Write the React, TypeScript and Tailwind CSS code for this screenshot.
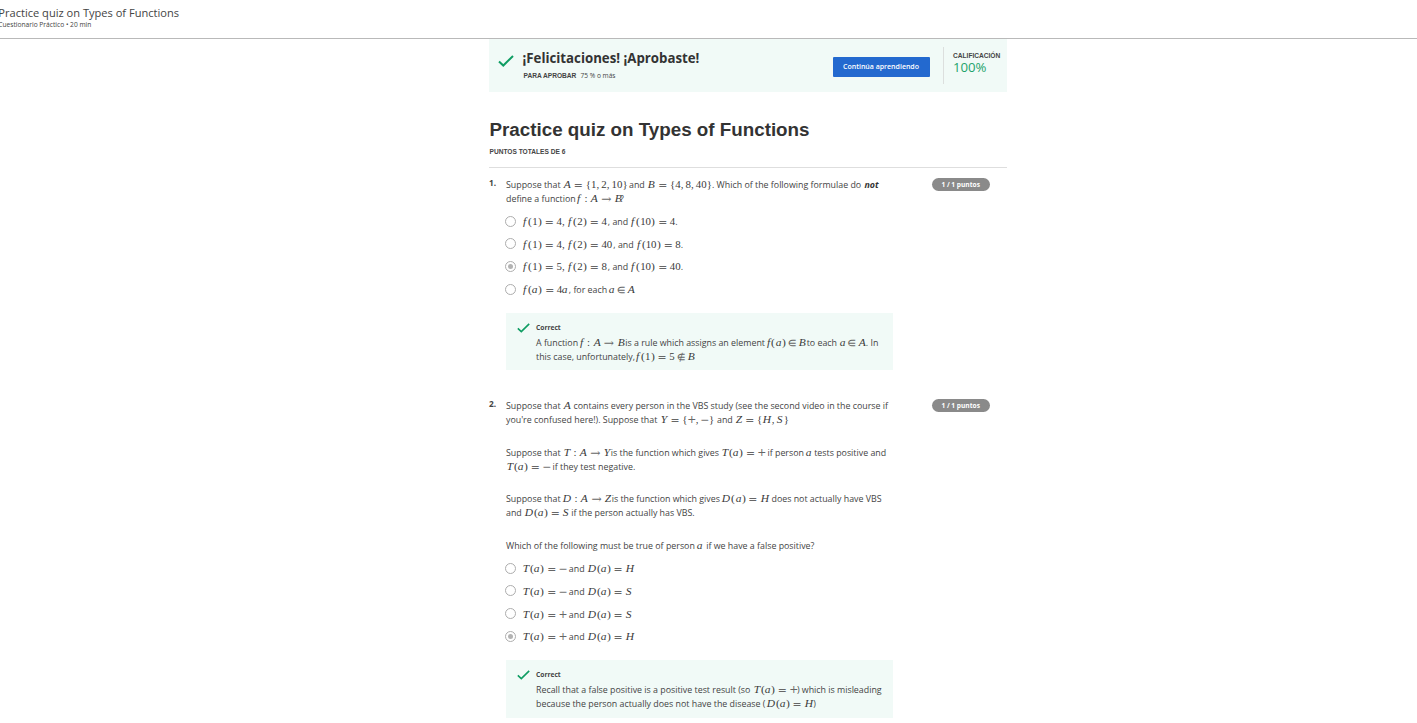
import React from "react";

const GLYPHS: Record<string, string> = {
  A: "w-[0.75em] italic", B: "w-[0.78em] italic", D: "w-[0.828em] italic", H: "w-[0.86em] italic",
  S: "w-[0.64em] italic", T: "w-[0.723em] italic", Y: "w-[0.76em] italic", Z: "w-[0.72em] italic",
  a: "w-[0.529em] italic", f: "w-[0.54em] italic",
  "(": "w-[0.42em]", ")": "w-[0.415em]", "{": "w-[0.5em]", "}": "w-[0.5em]", ",": "w-[0.445em]",
  "=": "w-[1.32em]", ":": "w-[0.834em]", "→": "w-[1.44em]", "∈": "w-[1.18em]", "∉": "w-[1.18em]",
  "+": "w-[0.76em]", "−": "w-[0.76em]",
};
const OPERATORS = "=+−→∈∉";

function Math({ children }: { children: string }) {
  return (
    <span className="-ml-[0.4px] inline-flex items-baseline font-['Liberation_Serif',serif] text-[10.85px] text-[#3a3a3a]">
      {Array.from(children).map((c, i) => (
        <span key={i} className={`flex shrink-0 ${c === "," ? "justify-start" : "justify-center"} ${GLYPHS[c] ?? "w-[0.5em]"}`}>
          {OPERATORS.includes(c) ? (
            <span className="font-['DejaVu_Math_TeX_Gyre','Liberation_Serif',serif] text-[#666]">{c}</span>
          ) : (
            <span className={/[A-Za-z()]/.test(c) ? "scale-x-[1.06]" : ""}>{c}</span>
          )}
        </span>
      ))}
    </span>
  );
}

function Seg({ w = "", m, children }: { w?: string; m?: boolean; children: string }) {
  return <span className={`block shrink-0 whitespace-pre ${w}`}>{m ? <Math>{children}</Math> : children}</span>;
}

function Line({ className = "", children }: { className?: string; children: React.ReactNode }) {
  return <div className={`flex h-[14px] items-baseline leading-[14px] ${className}`}>{children}</div>;
}

function Option({ checked, children }: { checked?: boolean; children: React.ReactNode }) {
  return (
    <div className="flex h-[22.7px] items-center">
      <span className="-ml-[1px] flex size-[11px] shrink-0 items-center justify-center rounded-full border border-[#adadad]">
        {checked && <span className="size-[5px] rounded-full bg-[#b3b3b3]" />}
      </span>
      <Line className="ml-[6.3px]">{children}</Line>
    </div>
  );
}

function Check({ className }: { className: string }) {
  return (
    <svg viewBox="0 0 16 12" fill="none" stroke="#0f9d63" strokeWidth="2" className={className}>
      <path d="M1 6.5 5.3 10.5 15 1" />
    </svg>
  );
}

function Feedback({ className, children }: { className: string; children: React.ReactNode }) {
  return (
    <div className={`flex w-[387.4px] bg-[#f1faf7] pl-[11px] ${className}`}>
      <Check className="mt-[10.5px] h-[10px] w-[13px]" />
      <div className="ml-[6px]">
        <div className="mt-[9px] mb-[2.4px] h-[11px] text-[6.7px] leading-[11px] font-bold">Correct</div>
        {children}
      </div>
    </div>
  );
}

function Question({ n, className, children }: { n: number; className: string; children: React.ReactNode }) {
  return (
    <section className={`flex ${className}`}>
      <div className="w-[17px] shrink-0 text-[8.3px] leading-[12px] font-bold">{n}.</div>
      <div className="w-[387.4px] shrink-0">{children}</div>
      <div className="mt-[0.6px] ml-[38.3px] flex h-[13px] w-[58px] shrink-0 items-center justify-center rounded-full bg-[#8a8a8a] text-[6.6px] font-bold text-white">
        1 / 1 puntos
      </div>
    </section>
  );
}

export default function App() {
  return (
    <div className="h-[723px] overflow-hidden bg-white font-['Open_Sans',sans-serif] text-[8.86px] text-[#444]">
      <header className="h-[39px] border-b border-[#b9b9b9] pt-[6px]">
        <div className="-ml-[1.7px]">
          <h1 className="text-[11.08px] leading-[14px]">Practice quiz on Types of Functions</h1>
          <p className="text-[6.65px] leading-[9px]">Cuestionario Práctico • 20 min</p>
        </div>
      </header>
      <main className="ml-[489px] w-[518px]">
        <div className="flex h-[53px] bg-[#f1faf7]">
          <Check className="mt-[16px] ml-[9px] h-[12px] w-[16px]" />
          <div className="ml-[8.5px] w-[310.5px]">
            <div className="mt-[10px] text-[13.25px] leading-[18px] font-bold whitespace-nowrap text-[#333]">¡Felicitaciones! ¡Aprobaste!</div>
            <div className="mt-[4px] flex items-baseline pl-[1px] text-[6.6px] leading-[9px]">
              <b className="w-[57px] font-['Liberation_Sans',sans-serif] whitespace-nowrap">PARA APROBAR</b>
              <span>75 % o más</span>
            </div>
          </div>
          <button className="mt-[17.5px] h-[20px] w-[97px] rounded-[1px] bg-[#2369cf] pt-px pr-px text-[7px] font-semibold whitespace-nowrap text-white">
            Continúa aprendiendo
          </button>
          <div className="mt-[8px] ml-[13px] h-[37px] border-l border-[#dcdfde] pl-[9px]">
            <div className="mt-[4px] font-['Liberation_Sans',sans-serif] text-[6.6px] leading-[9px] font-bold">CALIFICACIÓN</div>
            <div className="text-[13.2px] leading-[15px] text-[#1ea36c]">100%</div>
          </div>
        </div>
        <h2 className="mt-[26px] ml-[0.5px] font-['Liberation_Sans',sans-serif] text-[18.8px] leading-[24px] font-bold whitespace-nowrap text-[#333]">Practice quiz on Types of Functions</h2>
        <div className="mt-[5px] ml-[0.5px] font-['Liberation_Sans',sans-serif] text-[6.6px] leading-[9px] font-bold">PUNTOS TOTALES DE 6</div>
        <div className="mt-[11px] h-px bg-[#dedede]" />

        <Question n={1} className="mt-[9.4px]">
          <Line>
            <Seg w="w-[57.5px]">Suppose that</Seg><Seg m w="w-[65.5px]">{"A={1,2,10}"}</Seg><Seg w="w-[18.5px]">and</Seg>
            <Seg m w="w-[64.5px]">{"B={4,8,40}"}</Seg><Seg w="w-[152.5px]">. Which of the following formulae do</Seg>
            <b className="text-[#333] italic">not</b>
          </Line>
          <Line><Seg w="w-[70px]">define a function</Seg><Seg m w="w-[44px]">f:A→B</Seg><Seg>?</Seg></Line>
          <div className="mt-[4.3px]">
            <Option><Seg m w="w-[85.5px]">f(1)=4,f(2)=4</Seg><Seg w="w-[22.4px]">, and</Seg><Seg m w="w-[45px]">f(10)=4</Seg><Seg>.</Seg></Option>
            <Option><Seg m w="w-[91px]">f(1)=4,f(2)=40</Seg><Seg w="w-[22.4px]">, and</Seg><Seg m w="w-[45px]">f(10)=8</Seg><Seg>.</Seg></Option>
            <Option checked><Seg m w="w-[85.5px]">f(1)=5,f(2)=8</Seg><Seg w="w-[22.4px]">, and</Seg><Seg m w="w-[50.5px]">f(10)=40</Seg><Seg>.</Seg></Option>
            <Option><Seg m w="w-[46.5px]">f(a)=4a</Seg><Seg w="w-[40.5px]">, for each</Seg><Seg m>a∈A</Seg></Option>
          </div>
          <Feedback className="mt-[12.5px] h-[57.5px]">
            <Line>
              <Seg w="w-[42.5px]">A function</Seg><Seg m w="w-[46.7px]">f:A→B</Seg><Seg w="w-[140.3px]">is a rule which assigns an element</Seg>
              <Seg m w="w-[41.2px]">f(a)∈B</Seg><Seg w="w-[33.2px]">to each</Seg><Seg m w="w-[26px]">a∈A</Seg><Seg>. In</Seg>
            </Line>
            <Line><Seg w="w-[99px]">this case, unfortunately,</Seg><Seg m>f(1)=5∉B</Seg></Line>
          </Feedback>
        </Question>

        <Question n={2} className="mt-[28px]">
          <Line><Seg w="w-[57.5px]">Suppose that</Seg><Seg m w="w-[10px]">A</Seg><Seg>contains every person in the VBS study (see the second video in the course if</Seg></Line>
          <Line><Seg w="w-[154px]">you're confused here!). Suppose that</Seg><Seg m w="w-[57px]">{"Y={+,−}"}</Seg><Seg w="w-[18.3px]">and</Seg><Seg m>{"Z={H,S}"}</Seg></Line>
          <Line className="mt-[18.8px]">
            <Seg w="w-[57px]">Suppose that</Seg><Seg m w="w-[47.8px]">T:A→Y</Seg><Seg w="w-[110.4px]">is the function which gives</Seg>
            <Seg m w="w-[46.3px]">T(a)=+</Seg><Seg w="w-[38.5px]">if person</Seg><Seg m w="w-[8.2px]">a</Seg><Seg>tests positive and</Seg>
          </Line>
          <Line className="-mt-[0.5px]"><Seg m w="w-[46.5px]">T(a)=−</Seg><Seg>if they test negative.</Seg></Line>
          <Line className="mt-[18.5px]">
            <Seg w="w-[57px]">Suppose that</Seg><Seg m w="w-[48.7px]">D:A→Z</Seg><Seg w="w-[110.6px]">is the function which gives</Seg>
            <Seg m w="w-[49.2px]">D(a)=H</Seg><Seg>does not actually have VBS</Seg>
          </Line>
          <Line><Seg w="w-[18.7px]">and</Seg><Seg m w="w-[46.5px]">D(a)=S</Seg><Seg>if the person actually has VBS.</Seg></Line>
          <Line className="mt-[19px]"><Seg w="w-[191.7px]">Which of the following must be true of person</Seg><Seg m w="w-[8.5px]">a</Seg><Seg>if we have a false positive?</Seg></Line>
          <div className="mt-[4.6px]">
            <Option><Seg m w="w-[46.5px]">T(a)=−</Seg><Seg w="w-[18.7px]">and</Seg><Seg m>D(a)=H</Seg></Option>
            <Option><Seg m w="w-[46.5px]">T(a)=−</Seg><Seg w="w-[18.7px]">and</Seg><Seg m>D(a)=S</Seg></Option>
            <Option><Seg m w="w-[46.5px]">T(a)=+</Seg><Seg w="w-[18.7px]">and</Seg><Seg m>D(a)=S</Seg></Option>
            <Option checked><Seg m w="w-[46.5px]">T(a)=+</Seg><Seg w="w-[18.7px]">and</Seg><Seg m>D(a)=H</Seg></Option>
          </div>
          <Feedback className="mt-[12px] h-[58px]">
            <Line><Seg w="w-[217px]">Recall that a false positive is a positive test result (so</Seg><Seg m w="w-[43.9px]">T(a)=+</Seg><Seg>) which is misleading</Seg></Line>
            <Line className="-mt-[0.3px]"><Seg w="w-[230.5px]">because the person actually does not have the disease (</Seg><Seg m w="w-[46.7px]">D(a)=H</Seg><Seg>)</Seg></Line>
          </Feedback>
        </Question>
      </main>
    </div>
  );
}
